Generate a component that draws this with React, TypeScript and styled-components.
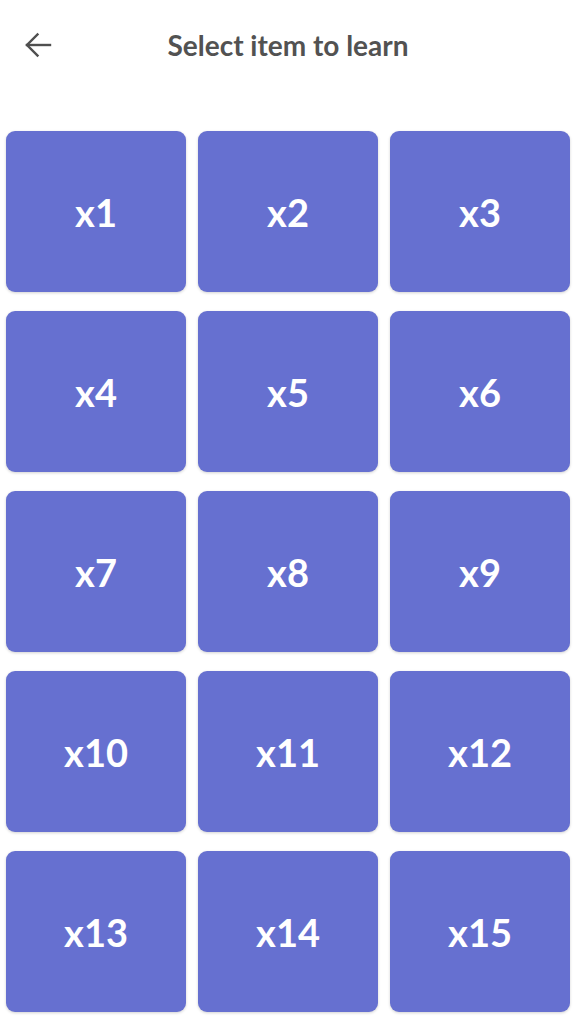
import styled, { createGlobalStyle } from "styled-components";

const GlobalStyle = createGlobalStyle`
  body {
    margin: 0;
    background: #ffffff;
    font-family: Lato, "Noto Sans", sans-serif;
  }
`;

const Page = styled.div`
  display: flex;
  flex-direction: column;
  min-height: 1024px;
`;

const Header = styled.header`
  height: 90px;
  display: grid;
  grid-template-columns: 76px 1fr 76px;
  align-items: center;
  margin-bottom: 41px;
`;

const BackButton = styled.button`
  width: 76px;
  height: 90px;
  border: none;
  background: none;
  padding: 0 0 0 24px;
  display: flex;
  align-items: center;
  cursor: pointer;
  color: #4f4f4f;
`;

const Title = styled.h1`
  margin: 0;
  text-align: center;
  font-size: 28px;
  font-weight: 700;
  color: #525252;
`;

const Grid = styled.div`
  display: grid;
  grid-template-columns: repeat(3, 180px);
  grid-auto-rows: 161px;
  column-gap: 12px;
  row-gap: 19px;
  padding: 0 6px;
`;

const Tile = styled.button`
  border: none;
  border-radius: 9px;
  background: #6670d0;
  box-shadow: 0 1px 3px rgba(0, 0, 0, 0.18);
  color: #ffffff;
  font-family: Lato, "Noto Sans", sans-serif;
  font-size: 38px;
  font-weight: 700;
  display: flex;
  align-items: center;
  justify-content: center;
  cursor: pointer;
`;

const items = Array.from({ length: 15 }, (_, i) => i + 1);

export default function App() {
  return (
    <>
      <GlobalStyle />
      <Page>
        <Header>
          <BackButton aria-label="Back">
            <svg width="28" height="28" viewBox="0 0 28 28" fill="none" stroke="currentColor" strokeWidth="2.4" strokeLinecap="square">
              <path d="M3 14h23" />
              <path d="M13.5 3.5L3 14l10.5 10.5" />
            </svg>
          </BackButton>
          <Title>Select item to learn</Title>
          <div />
        </Header>
        <Grid>
          {items.map((n) => (
            <Tile key={n}>x{n}</Tile>
          ))}
        </Grid>
      </Page>
    </>
  );
}
